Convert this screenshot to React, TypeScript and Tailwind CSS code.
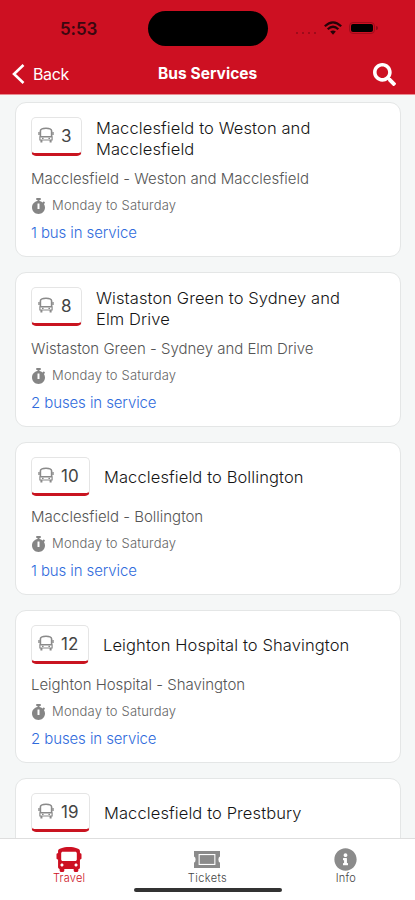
import { FaStopwatch, FaInfoCircle, FaSearch, FaBus } from "react-icons/fa";

type Service = {
  number: string;
  title: string[];
  details?: { route: string; buses: string };
};

const services: Service[] = [
  { number: "3", title: ["Macclesfield to Weston and", "Macclesfield"], details: { route: "Macclesfield - Weston and Macclesfield", buses: "1 bus in service" } },
  { number: "8", title: ["Wistaston Green to Sydney and", "Elm Drive"], details: { route: "Wistaston Green - Sydney and Elm Drive", buses: "2 buses in service" } },
  { number: "10", title: ["Macclesfield to Bollington"], details: { route: "Macclesfield - Bollington", buses: "1 bus in service" } },
  { number: "12", title: ["Leighton Hospital to Shavington"], details: { route: "Leighton Hospital - Shavington", buses: "2 buses in service" } },
  { number: "19", title: ["Macclesfield to Prestbury"] },
];

function BusOutline() {
  return (
    <svg viewBox="0 0 16 16" className="h-4 w-4 shrink-0 text-[#8a8a8a]" fill="none" stroke="currentColor">
      <path d="M2.4 9.9V4Q2.4 1.3 8 1.3T13.6 4V9.9" strokeWidth="1.6" />
      <path d="M2.2 9.7H13.8M1 5V8M15 5V8" strokeWidth="1.4" />
      <path d="M1.9 9.5V13H14.1V9.5M4 11.4H5.6M10.4 11.4H12" strokeWidth="1.2" />
      <path d="M3.4 13V15.4M12.6 13V15.4" strokeWidth="2" />
    </svg>
  );
}

function TicketIcon() {
  return (
    <svg viewBox="0 0 26 17" className="h-[17px] w-[26px] text-[#8b8b8b]">
      <path fill="currentColor" fillRule="evenodd" d="M0 0H26V5.5Q24.4 6 24.4 8.5T26 11.5V17H0V11.5Q1.6 11 1.6 8.5T0 5.5ZM4.6 3V14H21.4V3Z" />
      <path fill="currentColor" d="M5.7 4.1H20.3V12.9H5.7Z" />
    </svg>
  );
}

function ServiceCard({ service }: { service: Service }) {
  const wrapped = service.title.length > 1;
  return (
    <article className={`shrink-0 rounded-[11px] border border-[#e4e6e6] bg-white px-[15px] pt-[14px] ${wrapped ? "h-[155px]" : "h-[153px]"}`}>
      <div className={`flex ${wrapped ? "h-[46px]" : "h-[44px]"}`}>
        <div className={`flex h-[39px] shrink-0 gap-[7px] overflow-hidden rounded-[5px] border border-b-[3px] border-[#e5e5e5] border-b-[#c91420] pt-[9px] pl-[6px] ${wrapped ? "w-[51px]" : service.number === "12" ? "w-[58px]" : "w-[59px]"}`}>
          <BusOutline />
          <span className="text-[17px] leading-[18px] text-[#444]">{service.number}</span>
        </div>
        <h2 className={`text-[16.5px] leading-[20.5px] font-light tracking-[0.1px] whitespace-nowrap text-[#151515] ${wrapped ? "ml-[14px] pt-px" : "ml-[14px] pt-[10px]"}`}>
          {service.title.map((line) => (
            <span key={line} className="block">{line}</span>
          ))}
        </h2>
      </div>
      {service.details && (
        <>
          <p className="mt-[6px] text-[15px] leading-[20px] font-light tracking-[-0.02px] whitespace-nowrap text-[#555]">{service.details.route}</p>
          <div className="mt-[8px] flex h-[18px] items-center gap-[6px] text-[#666]">
            <FaStopwatch className="h-[16px] w-[15px] text-[#858585]" />
            <span className="text-[13px] font-light tracking-[0.17px]">Monday to Saturday</span>
          </div>
          <p className="mt-[8px] text-[15px] leading-[20px] font-light tracking-[-0.1px] text-[#2f6bdc]">{service.details.buses}</p>
        </>
      )}
    </article>
  );
}

export default function App() {
  return (
    <div className="flex h-[900px] w-[415px] flex-col overflow-hidden bg-[#f5f7f7] font-['Inter',sans-serif]">
      <header className="h-[95px] shrink-0 border-b border-[#e98b91] bg-[#cd1022]">
        <div className="grid h-[58px] grid-cols-[148px_120px_1fr]">
          <div className="pt-[19px] pl-[60px] text-[17px] leading-[20px] font-semibold tracking-[-0.1px] text-[#3b0710]">5:53</div>
          <div className="mt-[11px] h-[35px] rounded-full bg-black" />
          <div className="flex pt-[21px] pl-[28px]">
            <div className="mt-[11px] flex w-[20px] gap-[4px]">
              {[0, 1, 2, 3].map((dot) => (
                <span key={dot} className="h-[2px] w-[2px] rounded-full bg-[#8f0a18]" />
              ))}
            </div>
            <svg viewBox="0 0 18 14" className="ml-[8px] h-[14px] w-[18px] text-[#260308]" fill="none" stroke="currentColor" strokeWidth="2.2">
              <path d="M.8 5.2Q9-2.6 17.2 5.2M3.7 8.3Q9 3.2 14.3 8.3" />
              <path d="M6.2 10.6Q9 8.2 11.8 10.6L9 13.8Z" fill="currentColor" stroke="none" />
            </svg>
            <div className="ml-[7px] flex h-[14px] items-center">
              <span className="h-[12px] w-[26px] rounded-[4px] border border-[#a00b1a] p-px"><span className="block h-full rounded-[2px] bg-black" /></span>
              <span className="ml-px h-[4px] w-[2px] rounded-r bg-[#8f0a18]" />
            </div>
          </div>
        </div>
        <div className="grid h-[32px] grid-cols-[146px_1fr_auto] items-center pr-[19px] pl-[12px] text-white">
          <div className="flex items-center gap-[8px]">
            <svg viewBox="0 0 13 20" className="h-[20px] w-[13px]" fill="none" stroke="currentColor" strokeWidth="2.6"><path d="M11.5 1L2 10L11.5 19" /></svg>
            <span className="text-[16px] tracking-[-0.4px]">Back</span>
          </div>
          <h1 className="text-[15.5px] font-bold tracking-[0.05px]">Bus Services</h1>
          <FaSearch className="h-[23px] w-[23px]" />
        </div>
      </header>
      <main className="flex min-h-0 flex-1 flex-col gap-[15px] overflow-hidden pt-[7px] pr-[14px] pl-[15px]">
        {services.map((service) => <ServiceCard key={service.number} service={service} />)}
      </main>
      <footer className="h-[62px] shrink-0 border-t border-[#dedede] bg-white">
        <nav className="grid h-[49px] grid-cols-3 text-[11px] leading-[13px] font-light tracking-[0.2px] text-[#444]">
          <div className="flex flex-col items-center pt-[8px] text-[#cd1022]"><FaBus className="h-[25px] w-[26px]" /><span>Travel</span></div>
          <div className="flex flex-col items-center pt-[12px]"><TicketIcon /><span className="mt-[4px] tracking-[0.4px]">Tickets</span></div>
          <div className="flex flex-col items-center pt-[9px]"><FaInfoCircle className="h-[23px] w-[23px] text-[#8b8b8b]" /><span className="mt-px">Info</span></div>
        </nav>
        <div className="mx-auto h-[4px] w-[148px] rounded-full bg-[#333]" />
      </footer>
    </div>
  );
}
